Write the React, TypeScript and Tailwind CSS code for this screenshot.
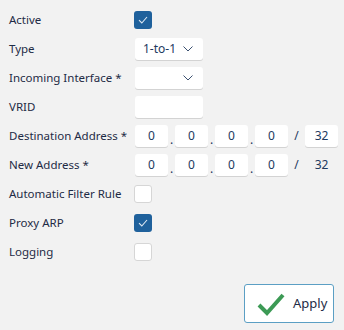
import { ReactNode } from "react";

const font = { fontFamily: '"Noto Sans", "Open Sans", sans-serif' };

function Row({ label, children }: { label: string; children?: ReactNode }) {
  return (
    <div className="flex h-[29px] items-center">
      <div className="w-[135px] shrink-0 whitespace-nowrap pl-[9px] text-[11.5px] text-[#1e2b45]">{label}</div>
      <div className="flex items-center">{children}</div>
    </div>
  );
}

function Checkbox({ checked }: { checked?: boolean }) {
  return checked ? (
    <div className="-ml-px flex h-[18px] w-[18px] items-center justify-center rounded-[3px] bg-[#1f619c]">
      <svg width="10" height="8" viewBox="0 0 10 8" fill="none">
        <path d="M1 4.2 L3.8 7 L9 1" stroke="#dfe9f3" strokeWidth="1.1" />
      </svg>
    </div>
  ) : (
    <div className="-ml-px h-[18px] w-[18px] rounded-[3px] border border-[#d6d6d6] bg-white" />
  );
}

function Box({ className = "", children }: { className?: string; children?: ReactNode }) {
  return (
    <div
      className={`flex h-[22px] shrink-0 items-center rounded-[3px] bg-white text-[12px] text-[#1e3a5f] shadow-[0_1px_0_#d3d3d3] ${className}`}
    >
      {children}
    </div>
  );
}

function Chevron() {
  return (
    <svg width="10" height="6" viewBox="0 0 10 6" fill="none">
      <path d="M0.5 0.5 L5 5 L9.5 0.5" stroke="#3b5070" strokeWidth="1" />
    </svg>
  );
}

function Select({ value }: { value?: string }) {
  return (
    <Box className="w-[68px] justify-between pl-[8px] pr-[10px]">
      <span>{value}</span>
      <Chevron />
    </Box>
  );
}

function Ip({ editableMask }: { editableMask?: boolean }) {
  return (
    <>
      {[0, 1, 2, 3].map((i) => (
        <div key={i} className="flex items-center">
          {i > 0 ? (
            <span className="w-[7px] self-end pb-[1px] text-center text-[12px] leading-none text-[#1e3a5f]">.</span>
          ) : null}
          <Box className="w-[33px] justify-center">0</Box>
        </div>
      ))}
      <span className="w-[17px] text-center text-[12px] text-[#1e3a5f]">/</span>
      {editableMask ? (
        <Box className="w-[33px] justify-center">32</Box>
      ) : (
        <span className="w-[33px] text-center text-[12px] text-[#1e3a5f]">32</span>
      )}
    </>
  );
}

export default function App() {
  return (
    <div className="h-[330px] w-[344px] bg-[#f2f2f2] pt-[5px]" style={font}>
      <Row label="Active">
        <Checkbox checked />
      </Row>
      <Row label="Type">
        <Select value="1-to-1" />
      </Row>
      <Row label="Incoming Interface *">
        <Select />
      </Row>
      <Row label="VRID">
        <Box className="w-[68px]" />
      </Row>
      <Row label="Destination Address *">
        <Ip editableMask />
      </Row>
      <Row label="New Address *">
        <Ip />
      </Row>
      <Row label="Automatic Filter Rule">
        <Checkbox />
      </Row>
      <Row label="Proxy ARP">
        <Checkbox checked />
      </Row>
      <Row label="Logging">
        <Checkbox />
      </Row>
      <div className="flex justify-end pr-[10px] pt-[18px]">
        <button className="flex h-[39px] w-[90px] items-center gap-[8px] rounded-[3px] border border-[#5b9fc4] bg-white pl-[12px] text-[13px] text-[#1e2b45]">
          <svg width="28" height="24" viewBox="0 0 28 24" fill="none">
            <path d="M2 13 L10 21 L26 3" stroke="#3c9a55" strokeWidth="4" />
          </svg>
          <span>Apply</span>
        </button>
      </div>
    </div>
  );
}
